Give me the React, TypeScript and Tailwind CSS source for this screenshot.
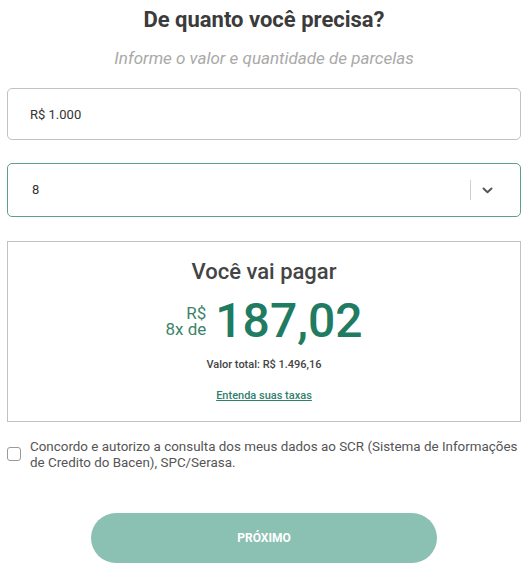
import React, { useState } from 'react';

const App: React.FC = () => {
  const [valor, setValor] = useState('R$ 1.000');
  const [parcelas, setParcelas] = useState('8');
  const [aceito, setAceito] = useState(false);

  return (
    <div className="w-[529px] min-h-[569px] bg-white font-['Roboto',sans-serif] pl-[7px] pr-[8px]">
      <h1 className="pt-[7px] text-center text-[22px] leading-[26px] font-bold text-[#3b3b3b]">
        De quanto você precisa?
      </h1>
      <p className="mt-[14px] text-center text-[17px] leading-[22px] italic text-[#a9a9a9]">
        Informe o valor e quantidade de parcelas
      </p>

      <input
        value={valor}
        onChange={(e) => setValor(e.target.value)}
        className="mt-[19px] block w-full h-[52px] px-[22px] rounded-[5px] border border-[#c2c2c2] text-[13px] text-[#333] outline-none"
      />

      <div className="mt-[23px] flex items-center h-[54px] rounded-[5px] border border-[#5f9f8d]">
        <span className="flex-1 pl-[24px] text-[13px] text-[#333]">{parcelas}</span>
        <div className="w-px h-[20px] bg-[#d0d0d0]" />
        <button
          onClick={() => setParcelas(parcelas === '8' ? '10' : '8')}
          className="w-[49px] h-full flex items-center pl-[11px] text-[#555]"
        >
          <svg width="11" height="7" viewBox="0 0 11 7" fill="none">
            <path d="M1.5 1.5L5.5 5.2L9.5 1.5" stroke="currentColor" strokeWidth="2" strokeLinecap="round" strokeLinejoin="round" />
          </svg>
        </button>
      </div>

      <div className="mt-[24px] h-[181px] border border-[#c2c2c2] flex flex-col items-center pt-[17px]">
        <h2 className="text-[22px] leading-[26px] font-medium text-[#444]">Você vai pagar</h2>
        <div className="mt-[9px] flex items-center gap-[9px]">
          <div className="flex flex-col items-end text-[17px] leading-[16px] text-[#3b8468]">
            <span>R$</span>
            <span>8x de</span>
          </div>
          <span className="text-[48px] leading-[54px] font-medium text-[#1f7b62]">187,02</span>
        </div>
        <p className="mt-[10px] text-[11px] leading-[14px] font-medium text-[#444]">Valor total: R$ 1.496,16</p>
        <a href="#" className="mt-[17px] text-[11px] leading-[14px] font-medium text-[#2f7f6d] underline">
          Entenda suas taxas
        </a>
      </div>

      <label className="mt-[17px] flex items-start gap-[9px] cursor-pointer">
        <input
          type="checkbox"
          checked={aceito}
          onChange={(e) => setAceito(e.target.checked)}
          className="appearance-none mt-[8px] w-[14px] h-[14px] shrink-0 rounded-[3px] border border-[#999] bg-white checked:bg-[#1f7b60]"
        />
        <span className="text-[13.4px] leading-[16px] text-[#555]">
          Concordo e autorizo a consulta dos meus dados ao SCR (Sistema de Informações de Credito do Bacen), SPC/Serasa.
        </span>
      </label>

      <div className="mt-[42px] flex justify-center">
        <button
          disabled={!aceito}
          className="w-[346px] h-[50px] rounded-full bg-[#8bc1b3] text-white text-[12px] font-bold"
        >
          PRÓXIMO
        </button>
      </div>
    </div>
  );
};

export default App;
